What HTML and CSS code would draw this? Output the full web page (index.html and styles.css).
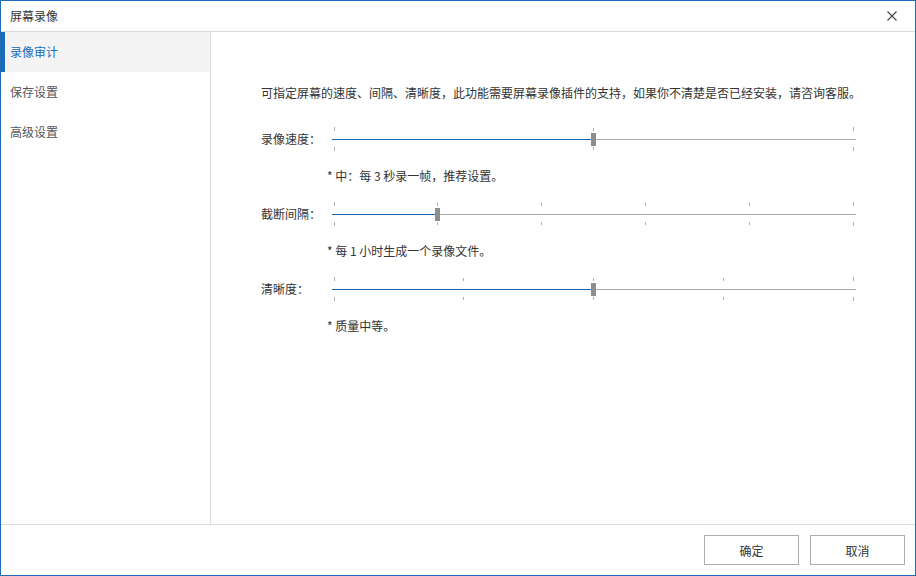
FILE: index.html
```html
<!DOCTYPE html>
<html lang="zh-CN">
<head>
<meta charset="utf-8">
<title>屏幕录像</title>
<link rel="stylesheet" href="styles.css">
</head>
<body>
<div class="window">
  <div class="titlebar">
    <span class="title">屏幕录像</span>
    <span class="close"><svg width="12" height="12" viewBox="0 0 12 12"><path d="M1.5 1.5L10.5 10.5M10.5 1.5L1.5 10.5" stroke="#444" stroke-width="1.1" fill="none"/></svg></span>
  </div>
  <div class="main">
    <div class="sidebar">
      <div class="nav-item active">录像审计</div>
      <div class="nav-item">保存设置</div>
      <div class="nav-item">高级设置</div>
    </div>
    <div class="content">
      <div class="desc">可指定屏幕的速度、间隔、清晰度，此功能需要屏幕录像插件的支持，如果你不清楚是否已经安装，请咨询客服。</div>

      <div class="row">
        <div class="label">录像速度：</div>
        <div class="slider">
          <div class="track-fill" style="width:261px"></div>
          <div class="tick end top" style="left:2px"></div><div class="tick end bottom" style="left:2px"></div>
          <div class="tick top" style="left:261px"></div><div class="tick bottom" style="left:261px"></div>
          <div class="tick end top" style="left:521px"></div><div class="tick end bottom" style="left:521px"></div>
          <div class="thumb" style="left:259px"></div>
        </div>
      </div>
      <div class="hint">* 中：每 3 秒录一帧，推荐设置。</div>

      <div class="row">
        <div class="label">截断间隔：</div>
        <div class="slider">
          <div class="track-fill" style="width:105px"></div>
          <div class="tick end top" style="left:2px"></div><div class="tick end bottom" style="left:2px"></div>
          <div class="tick top" style="left:105px"></div><div class="tick bottom" style="left:105px"></div>
          <div class="tick top" style="left:209px"></div><div class="tick bottom" style="left:209px"></div>
          <div class="tick top" style="left:313px"></div><div class="tick bottom" style="left:313px"></div>
          <div class="tick top" style="left:417px"></div><div class="tick bottom" style="left:417px"></div>
          <div class="tick end top" style="left:521px"></div><div class="tick end bottom" style="left:521px"></div>
          <div class="thumb" style="left:103px"></div>
        </div>
      </div>
      <div class="hint">* 每 1 小时生成一个录像文件。</div>

      <div class="row">
        <div class="label">清晰度：</div>
        <div class="slider">
          <div class="track-fill" style="width:261px"></div>
          <div class="tick end top" style="left:2px"></div><div class="tick end bottom" style="left:2px"></div>
          <div class="tick top" style="left:131px"></div><div class="tick bottom" style="left:131px"></div>
          <div class="tick top" style="left:261px"></div><div class="tick bottom" style="left:261px"></div>
          <div class="tick top" style="left:391px"></div><div class="tick bottom" style="left:391px"></div>
          <div class="tick end top" style="left:521px"></div><div class="tick end bottom" style="left:521px"></div>
          <div class="thumb" style="left:259px"></div>
        </div>
      </div>
      <div class="hint">* 质量中等。</div>
    </div>
  </div>
  <div class="footer">
    <button class="btn">确定</button>
    <button class="btn">取消</button>
  </div>
</div>
</body>
</html>
```
FILE: styles.css
```css
* { box-sizing: border-box; }
html, body { margin: 0; padding: 0; background: #fff; }
body {
  font-family: "Noto Sans CJK SC", "Noto Sans", "Liberation Sans", sans-serif;
  font-size: 12px;
  color: #333;
}
.window {
  width: 916px;
  height: 576px;
  border: 1px solid #1c6cb8;
  display: flex;
  flex-direction: column;
  background: #fff;
}
.titlebar {
  height: 31px;
  border-bottom: 1px solid #dcdcdc;
  display: flex;
  align-items: center;
  justify-content: space-between;
  padding: 0 17px 0 9px;
  flex: none;
}
.title { color: #333; line-height: 14px; }
.close { display: flex; width: 12px; height: 12px; }
.main {
  flex: 1;
  display: flex;
  min-height: 0;
}
.sidebar {
  width: 210px;
  border-right: 1px solid #dcdcdc;
  flex: none;
}
.nav-item {
  height: 40px;
  line-height: 40px;
  padding-left: 9px;
  color: #555;
  border-left: 4px solid transparent;
  margin-left: 0;
}
.nav-item { padding-left: 5px; }
.nav-item.active {
  background: #f4f4f4;
  border-left-color: #1c6cb8;
  color: #1c6cb8;
}
.content {
  flex: 1;
  padding: 54px 0 0 50px;
}
.desc {
  line-height: 14px;
  white-space: nowrap;
  margin-bottom: 27px;
  color: #333;
}
.row {
  display: flex;
  align-items: center;
  height: 24px;
}
.label {
  width: 71px;
  flex: none;
  color: #333;
  line-height: 14px;
}
.slider {
  position: relative;
  width: 524px;
  height: 24px;
  background: linear-gradient(#a8a8a8, #a8a8a8) 0 12px / 100% 1px no-repeat;
}
.track-fill {
  position: absolute;
  left: 0;
  top: 12px;
  height: 1px;
  background: #1f62ad;
}
.tick {
  position: absolute;
  width: 1px;
  height: 3px;
  background: #b0b0b0;
}
.tick.top { top: 1px; }
.tick.bottom { top: 20px; }
.tick.end.top { top: 0; height: 4px; }
.tick.end.bottom { top: 20px; height: 4px; }
.thumb {
  position: absolute;
  top: 6px;
  width: 5px;
  height: 13px;
  background: #8e8e8e;
}
.hint {
  margin: 18px 0 19px 66px;
  line-height: 14px;
  color: #333;
}
.footer {
  height: 51px;
  border-top: 1px solid #dcdcdc;
  flex: none;
  display: flex;
  justify-content: flex-end;
  align-items: flex-start;
  gap: 11px;
  padding: 10px 10px 0 0;
}
.btn {
  width: 95px;
  height: 30px;
  border: 1px solid #adadad;
  background: #fff;
  font-family: inherit;
  font-size: 12px;
  color: #333;
  padding: 0;
}
```
